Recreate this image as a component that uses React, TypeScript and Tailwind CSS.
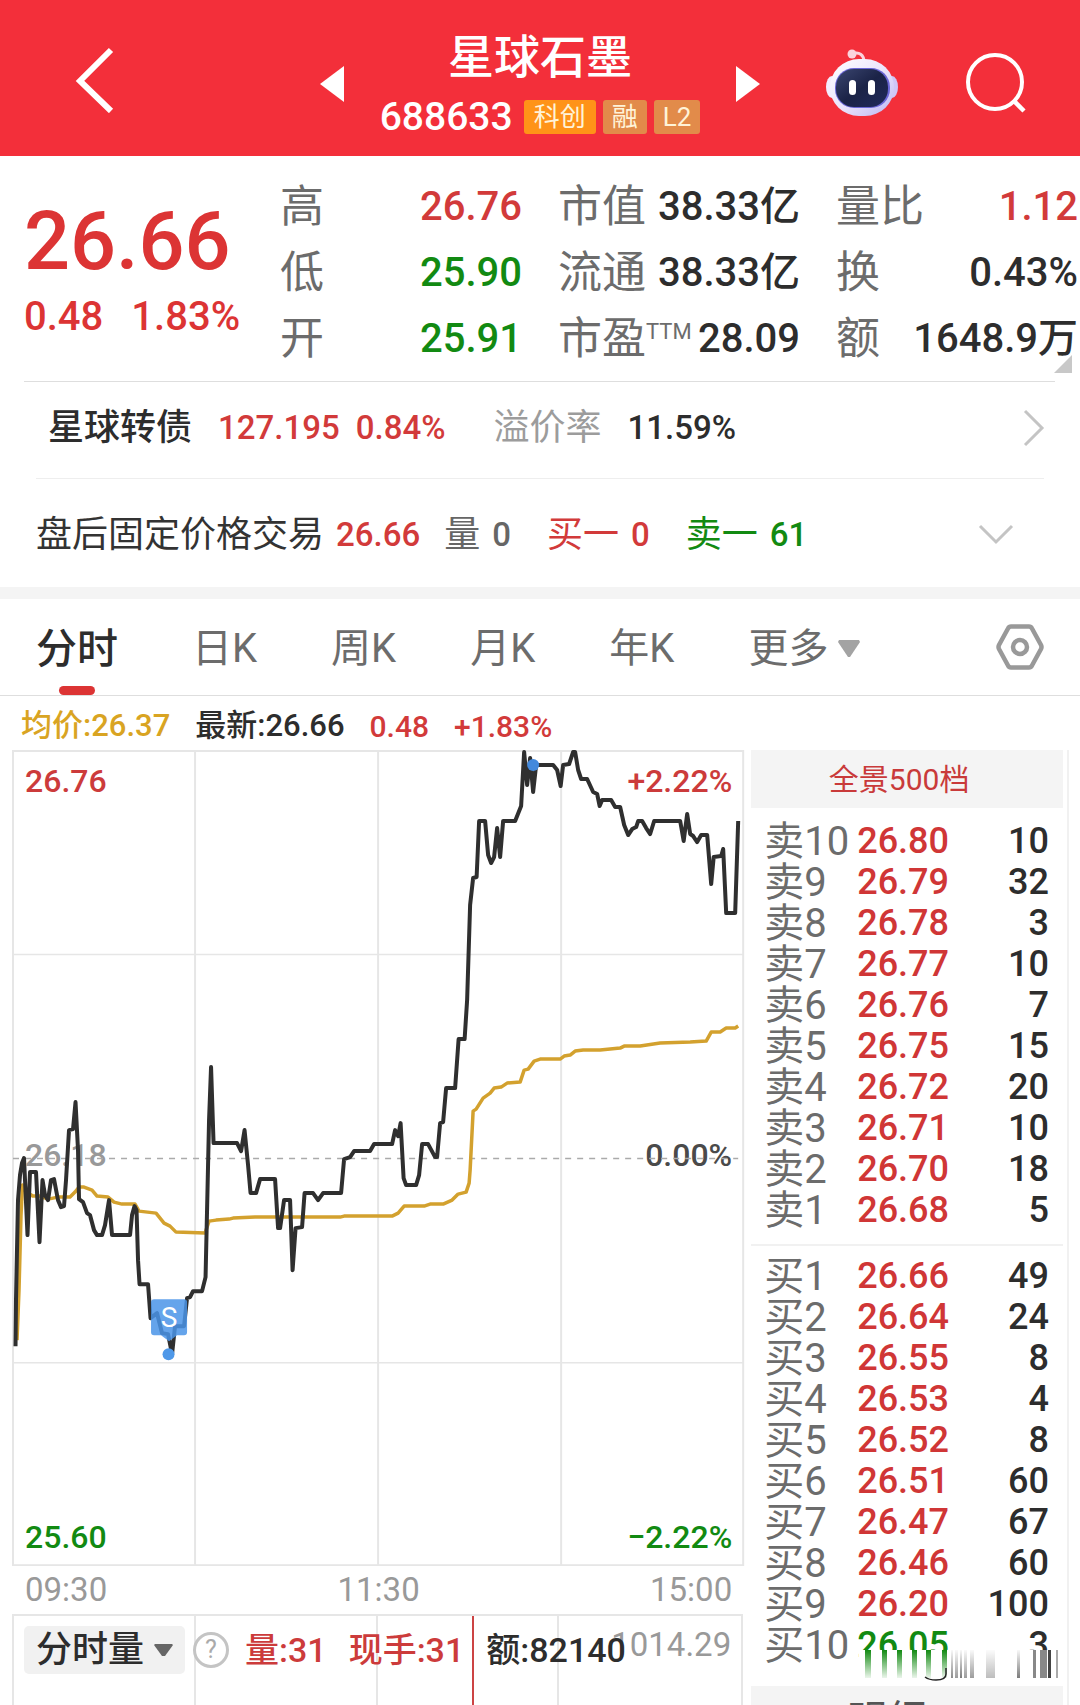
import { useState } from 'react';
import clsx from 'clsx';

interface Level {
  label: string;
  price: string;
  volume: number;
  down?: boolean;
}

const SELLS: Level[] = [
  { label: '卖10', price: '26.80', volume: 10 },
  { label: '卖9', price: '26.79', volume: 32 },
  { label: '卖8', price: '26.78', volume: 3 },
  { label: '卖7', price: '26.77', volume: 10 },
  { label: '卖6', price: '26.76', volume: 7 },
  { label: '卖5', price: '26.75', volume: 15 },
  { label: '卖4', price: '26.72', volume: 20 },
  { label: '卖3', price: '26.71', volume: 10 },
  { label: '卖2', price: '26.70', volume: 18 },
  { label: '卖1', price: '26.68', volume: 5 },
];

const BUYS: Level[] = [
  { label: '买1', price: '26.66', volume: 49 },
  { label: '买2', price: '26.64', volume: 24 },
  { label: '买3', price: '26.55', volume: 8 },
  { label: '买4', price: '26.53', volume: 4 },
  { label: '买5', price: '26.52', volume: 8 },
  { label: '买6', price: '26.51', volume: 60 },
  { label: '买7', price: '26.47', volume: 67 },
  { label: '买8', price: '26.46', volume: 60 },
  { label: '买9', price: '26.20', volume: 100 },
  { label: '买10', price: '26.05', volume: 3, down: true },
];

const TABS = ['分时', '日K', '周K', '月K', '年K'];

const PRICE_LINE =
  '15.5,1346 16,1300 18,1200 20,1175 22,1163 24,1158 27.5,1235 30,1172 36,1172 39.5,1242 42.5,1180 45,1195 48,1200 51,1180 54,1179 58,1200 61,1207 64,1206 66,1180 69,1130 73,1129 75.5,1102 78,1150 79,1199 83,1202 87,1213 90,1215 94,1230 97,1235 102,1235 105,1225 109,1200 112,1235 130,1235 132,1215 134.5,1206 136.5,1210 138,1260 139.5,1284 148,1284 150.5,1318 157,1313 162,1333 168,1334 172,1354 175,1326 184,1326 187,1298 190,1297 193,1291 202,1291 205.5,1277 207,1210 209,1120 211,1067 213.5,1143 237,1143 241,1151 244.5,1130 248,1165 250.5,1193 256,1193 260,1179 275,1179 278,1228 280,1228 284,1200 290,1200 292.5,1270 295.5,1228 302,1227 304.5,1193 313,1193 318,1200 323,1193 341,1193 344,1159 350,1157 354,1151 370,1151 374,1144 392,1144 395,1130 398,1136 400.5,1123 403.5,1178 406,1185 416,1185 419,1175 422,1144 428,1144 435,1157 437,1157 440,1123 443,1122 446,1088 455,1088 458.5,1039 464.5,1039 467,1000 470,905 473,878 476.5,877 479,821 485,821 488,855 491,863 494,857 497,828 500,857 503,821 515,821 521,806 524,752 527,785 530,758 533,792 536,765 553,765 557,770 560.5,786 563,765 569,764 573,752 575,752 578,770 581,779 587,779 593,792 597,794 599.5,806 602,800 611,800 615,807 620,807 624,825 628,835 632,829 636,827 638,821 642,821 646,828 650,834 654,821 680,821 683.5,841 687,814 690,834 693,836 697,842 701,835 707,835 711,884 713.5,857 721,856 723,849 726,913 735,913 738,821';

const AVERAGE_LINE =
  '17,1340 19,1290 21,1215 22.5,1185 26,1192 33,1196 40,1196 48,1199 58,1197 70,1197 75,1192 79,1187 84,1187 92,1190 97,1196 108,1197 114,1202 122,1204 135,1204 139,1211 156,1213 164,1223 170,1226 176,1232 205,1233 209,1221 216,1220 229,1219 233,1218 255,1217 340,1217 344,1216 392,1216 398,1213 404,1206 424,1206 430,1204 443,1204 452,1200 458,1194 466,1192 469,1183 470,1170 473,1111 476,1109 483,1098 490,1093 494,1088 501,1087 507,1083 520,1082 524,1070 528,1069 534,1061 540,1059 560,1059 564,1056 570,1055 575,1051 583,1050 600,1050 620,1048 624,1046 640,1046 660,1043 690,1042 706,1041 711,1032 720,1032 726,1028 735,1028 738,1026';

function RobotIcon() {
  return (
    <svg viewBox="0 0 72 68" className="h-[68px] w-[72px]" aria-hidden="true">
      <defs>
        <linearGradient id="shell" x1="0" y1="0" x2="1" y2="1">
          <stop offset="0" stopColor="#ffffff" />
          <stop offset="0.55" stopColor="#e9e2fb" />
          <stop offset="1" stopColor="#b9b4f3" />
        </linearGradient>
        <linearGradient id="visor" x1="0" y1="0" x2="1" y2="1">
          <stop offset="0" stopColor="#3b4670" />
          <stop offset="0.5" stopColor="#1b2347" />
          <stop offset="1" stopColor="#20295a" />
        </linearGradient>
      </defs>
      <path d="M26 5 C33 2 38 6 38 13" fill="none" stroke="#fbd3dc" strokeWidth="3" />
      <circle cx="26" cy="5" r="4.5" fill="#fbd3dc" />
      <ellipse cx="6" cy="38" rx="6" ry="11" fill="#f3ecfd" />
      <ellipse cx="66" cy="38" rx="6" ry="11" fill="#cfc6f7" />
      <rect x="4" y="10" width="64" height="57" rx="29" fill="url(#shell)" />
      <rect x="9" y="19" width="55" height="40" rx="19" fill="#6a66d6" />
      <rect x="10" y="20" width="52" height="38" rx="18" fill="url(#visor)" />
      <rect x="23" y="31" width="7" height="15" rx="3.5" fill="#fff" />
      <rect x="42" y="31" width="7" height="15" rx="3.5" fill="#fff" />
    </svg>
  );
}

function Header() {
  return (
    <header className="grid h-[156px] shrink-0 grid-cols-[1fr_auto_1fr] items-center bg-[#f32f3a] text-white">
      <button aria-label="返回" className="ml-[74px] w-10 pt-1">
        <svg viewBox="0 0 40 66" className="h-[66px] w-10">
          <path d="M37 3 L6 34 L37 64" fill="none" stroke="#fff" strokeWidth="6" />
        </svg>
      </button>
      <div className="flex items-center gap-9 pt-[11px]">
        <button aria-label="上一只">
          <svg viewBox="0 0 24 36" className="h-9 w-6">
            <path d="M24 0 V36 L0 18 Z" fill="#fff" />
          </svg>
        </button>
        <div className="flex flex-col items-center pt-[6px]">
          <h1 className="text-[46px] leading-[60px] font-medium">星球石墨</h1>
          <div className="flex items-center gap-[7px] text-[26px] leading-[34px] text-[#fff3d8]">
            <span className="mr-1 text-[39px] leading-[60px] font-medium text-white">688633</span>
            <span className="rounded-[3px] bg-[#ff9318] px-[10px]">科创</span>
            <span className="rounded-[3px] bg-[#e28b4a] px-[9px]">融</span>
            <span className="rounded-[3px] bg-[#e28b4a] px-[9px]">L2</span>
          </div>
        </div>
        <button aria-label="下一只">
          <svg viewBox="0 0 24 36" className="h-9 w-6">
            <path d="M0 0 V36 L24 18 Z" fill="#fff" />
          </svg>
        </button>
      </div>
      <div className="flex items-center justify-end gap-[68px] pt-[10px] pr-[54px]">
        <button aria-label="智能助手">
          <RobotIcon />
        </button>
        <button aria-label="搜索">
          <svg viewBox="0 0 60 62" className="h-[62px] w-[60px]">
            <circle cx="29" cy="30" r="27" fill="none" stroke="#fff" strokeWidth="4" />
            <path d="M48 49 L58 59" stroke="#fff" strokeWidth="4.5" />
          </svg>
        </button>
      </div>
    </header>
  );
}

interface QuoteItemProps {
  label: string;
  value: string;
  color?: string;
  sup?: string;
}

function QuoteItem({ label, value, color = 'text-[#2d2d2d]', sup }: QuoteItemProps) {
  return (
    <div className="flex items-center justify-between whitespace-nowrap">
      <dt className="flex text-[44px] text-[#6c6c6c]">
        {label}
        {sup && <sup className="top-0 pt-[15px] text-[22px] leading-[22px]">{sup}</sup>}
      </dt>
      <dd className={clsx('text-[40px] font-medium', color)}>{value}</dd>
    </div>
  );
}

function Quote() {
  return (
    <section className="relative flex pt-[18px] pb-[9px]">
      <div className="w-[280px] shrink-0 pl-6 font-medium text-[#dc3434]">
        <p className="pt-5 text-[81px] leading-[96px]">26.66</p>
        <p className="flex gap-7 text-[40px] leading-[54px] whitespace-nowrap">
          <span>0.48</span>
          <span>1.83%</span>
        </p>
      </div>
      <dl className="grid flex-1 grid-cols-3 gap-x-9 pr-0.5 leading-[66px]">
        <QuoteItem label="高" value="26.76" color="text-[#d23a3a]" />
        <QuoteItem label="市值" value="38.33亿" />
        <QuoteItem label="量比" value="1.12" color="text-[#d23a3a]" />
        <QuoteItem label="低" value="25.90" color="text-[#128a12]" />
        <QuoteItem label="流通" value="38.33亿" />
        <QuoteItem label="换" value="0.43%" />
        <QuoteItem label="开" value="25.91" color="text-[#128a12]" />
        <QuoteItem label="市盈" sup="TTM" value="28.09" />
        <QuoteItem label="额" value="1648.9万" />
      </dl>
      <svg viewBox="0 0 18 18" className="absolute right-2 bottom-2 size-[18px]" aria-hidden="true">
        <path d="M18 0 V18 H0 Z" fill="#c8c8c8" />
      </svg>
    </section>
  );
}

function RelatedRows() {
  return (
    <section className="leading-[48px] whitespace-nowrap">
      <a href="#bond" className="mr-[25px] ml-6 flex h-[97px] items-center border-t border-[#dedede] pb-1 pl-6 text-[33px] font-medium text-[#d23a3a]">
        <span className="text-[36px] text-[#2d2d2d]">星球转债</span>
        <span className="ml-[26px]">127.195</span>
        <span className="ml-4">0.84%</span>
        <span className="ml-12 text-[36px] font-normal text-[#9c9c9c]">溢价率</span>
        <span className="ml-[26px] text-[#2d2d2d]">11.59%</span>
        <svg viewBox="0 0 22 38" className="mr-[10px] ml-auto h-[38px] w-[22px]" aria-hidden="true">
          <path d="M2 2 L19 19 L2 36" fill="none" stroke="#c4c4c4" strokeWidth="3" />
        </svg>
      </a>
      <div className="mx-9 flex h-[109px] items-center border-t border-[#eee] pt-1 text-[33px] font-medium">
        <span className="text-[36px] font-normal text-[#333]">盘后固定价格交易</span>
        <span className="ml-3 text-[#d23a3a]">26.66</span>
        <span className="ml-6 text-[36px] font-normal text-[#666]">量</span>
        <span className="ml-3 text-[#666]">0</span>
        <span className="ml-9 text-[36px] font-normal text-[#d23a3a]">买一</span>
        <span className="ml-3 text-[#d23a3a]">0</span>
        <span className="ml-9 text-[36px] font-normal text-[#128a12]">卖一</span>
        <span className="ml-3 text-[#128a12]">61</span>
        <button aria-label="展开" className="mr-[30px] ml-auto">
          <svg viewBox="0 0 36 22" className="h-[22px] w-9">
            <path d="M2 2 L18 18 L34 2" fill="none" stroke="#c4c4c4" strokeWidth="3" />
          </svg>
        </button>
      </div>
    </section>
  );
}

function Tabs() {
  const [active, setActive] = useState('分时');

  return (
    <nav className="flex h-[109px] shrink-0 items-center border-t-[12px] border-b border-t-[#f4f4f4] border-b-[#dedede] pr-9 pl-9 text-[40px] leading-[96px] whitespace-nowrap text-[#6c6c6c]">
      <div className="flex gap-[74px]">
        {TABS.map((tab) => (
          <button
            key={tab}
            onClick={() => setActive(tab)}
            className={clsx('relative pt-1', active === tab && 'text-[41px] font-medium text-[#2d2d2d]')}
          >
            {tab}
            {active === tab && (
              <span className="absolute bottom-0.5 left-1/2 h-[9px] w-9 -translate-x-1/2 rounded-full bg-[#dc3434]" />
            )}
          </button>
        ))}
        <button className="flex items-center gap-[10px] pt-1">
          更多
          <svg viewBox="0 0 22 18" className="h-[18px] w-[22px]" aria-hidden="true">
            <path d="M1 0 H21 L22 2 L12 17 H10 L0 2 Z" fill="#a3a3a3" />
          </svg>
        </button>
      </div>
      <button aria-label="设置" className="ml-auto">
        <svg viewBox="0 0 48 46" className="h-[46px] w-12">
          <path d="M15 2.5 H33 Q35 2.5 36 4.5 L45 21 Q46 23 45 25 L36 41.5 Q35 43.5 33 43.5 H15 Q13 43.5 12 41.5 L3 25 Q2 23 3 21 L12 4.5 Q13 2.5 15 2.5 Z" fill="none" stroke="#999" strokeWidth="4.5" />
          <circle cx="24" cy="23" r="7" fill="none" stroke="#999" strokeWidth="4.5" />
        </svg>
      </button>
    </nav>
  );
}

function PriceChart() {
  return (
    <div className="relative text-[32px] leading-[40px] font-medium">
      <svg viewBox="12 750 733 816" className="block w-full" role="img" aria-label="分时走势">
        <g fill="none" stroke="#e6e6e6" strokeWidth="2">
          <rect x="13" y="751" width="730" height="814" />
          <path d="M195 751 V1565 M378 751 V1565 M561 751 V1565" />
          <path d="M13 954.5 H743 M13 1362.5 H743" strokeWidth="1.5" />
        </g>
        <text x="25" y="1166" fill="#999">26.18</text>
        <text x="732" y="1166" fill="#4a4a4a" textAnchor="end">0.00%</text>
        <path d="M13 1158.5 H738" stroke="#aaa" strokeWidth="1.5" strokeDasharray="6 6" />
        <polyline points={AVERAGE_LINE} fill="none" stroke="#d3a12e" strokeWidth="3.5" strokeLinejoin="round" />
        <polyline points={PRICE_LINE} fill="none" stroke="#2f2f2f" strokeWidth="4" strokeLinejoin="round" />
        <circle cx="533" cy="765" r="6" fill="#4389dc" />
        <path d="M154 1299 H184 Q187 1299 187 1302 V1332 Q187 1335 184 1335 H177 L169 1341 L161 1335 H154 Q151 1335 151 1332 V1302 Q151 1299 154 1299 Z" fill="#4a94e8" fillOpacity="0.85" />
        <circle cx="168.5" cy="1354" r="6" fill="#4f98e8" />
        <text x="169" y="1327" fill="#fff" fontSize="28" fontWeight="400" textAnchor="middle">S</text>
      </svg>
      <span className="absolute top-[11px] left-[13px] text-[#cc3b3b]">26.76</span>
      <span className="absolute top-[11px] right-[13px] text-[#cc3b3b]">+2.22%</span>
      <span className="absolute bottom-[9px] left-[13px] text-[#128a12]">25.60</span>
      <span className="absolute right-[13px] bottom-[9px] text-[#128a12]">−2.22%</span>
    </div>
  );
}

function VolumePanel() {
  return (
    <div className="relative mr-0.5 min-h-0 flex-1 border-x-2 border-t-2 border-[#e6e6e6]">
      <div className="absolute inset-0 grid grid-cols-4 divide-x-2 divide-[#e6e6e6]">
        <div />
        <div />
        <div />
        <div />
      </div>
      <div className="absolute inset-y-0 left-[63%] w-0.5 bg-[#c44]" />
      <span className="absolute top-[9px] right-[10px] text-[33px] leading-[40px] text-[#999]">1014.29</span>
      <div className="relative flex items-center pt-[10px] pl-[10px] text-[34px] leading-[48px] font-medium whitespace-nowrap text-[#cc3b3b]">
        <button className="flex items-center gap-[10px] rounded-[5px] bg-[#f1f1f1] pr-3 pl-3 text-[36px] text-[#2d2d2d]">
          分时量
          <svg viewBox="0 0 19 13" className="h-[13px] w-[19px]" aria-hidden="true">
            <path d="M1 0 H18 L19 1 L11 12 H8 L0 1 Z" fill="#666" />
          </svg>
        </button>
        <button
          aria-label="说明"
          className="ml-2 size-9 rounded-full border-[3px] border-[#c4c4c4] bg-white text-[25px] leading-[30px] font-normal text-[#aaa]"
        >
          ?
        </button>
        <span className="ml-4">量:31</span>
        <span className="ml-[22px]">现手:31</span>
        <span className="ml-[22px] text-[#2d2d2d]">额:82140</span>
      </div>
    </div>
  );
}

function LevelTable({ levels, name }: { levels: Level[]; name: string }) {
  return (
    <table aria-label={name} className="w-full leading-[41px] whitespace-nowrap">
      <tbody>
        {levels.map((level) => (
          <tr key={level.label} className="h-[41px]">
            <th scope="row" className="w-[106px] p-0 pl-[13px] text-left text-[40px] font-normal text-[#6c6c6c]">
              {level.label}
            </th>
            <td className={clsx('p-0 text-[36px] font-medium', level.down ? 'text-[#128a12]' : 'text-[#d03636]')}>
              {level.price}
            </td>
            <td className="p-0 pr-[14px] text-right text-[36px] font-medium text-[#2d2d2d]">{level.volume}</td>
          </tr>
        ))}
      </tbody>
    </table>
  );
}

// vertical streaks fading over the last row: x, width, colour
const STREAKS: [number, number, string][] = [
  [6, 6, '#128a12'],
  [23, 5, '#128a12'],
  [38, 5, '#128a12'],
  [53, 5, '#128a12'],
  [67, 5, '#128a12'],
  [83, 5, '#128a12'],
  [92, 2, '#888'],
  [96, 3, '#999'],
  [101, 2, '#777'],
  [105, 3, '#999'],
  [111, 4, '#999'],
  [127, 9, '#bbb'],
  [158, 3, '#777'],
  [174, 3, '#888'],
  [181, 7, '#888'],
  [189, 3, '#444'],
  [197, 2, '#aaa'],
];

function OrderBook() {
  return (
    <aside className="mr-[11px] min-w-0 border-r-2 border-[#f1f1f1] pr-1 pl-[6px]">
      <button className="block h-[58px] w-full bg-[#f4f4f4] pr-4 text-[30px] text-[#c93a3a]">全景500档</button>
      <div className="pt-[13px] pb-[13px]">
        <LevelTable levels={SELLS} name="卖盘" />
      </div>
      <div className="relative border-t-2 border-[#f1f1f1] pt-[10px] pb-5">
        <LevelTable levels={BUYS} name="买盘" />
        <svg viewBox="0 0 204 32" className="absolute right-0 bottom-1 h-8 w-[204px]" aria-hidden="true">
          <defs>
            <linearGradient id="fadeDown" x1="0" y1="0" x2="0" y2="1">
              <stop offset="0" stopColor="#fff" stopOpacity="0" />
              <stop offset="1" stopColor="#fff" stopOpacity="0.95" />
            </linearGradient>
            <linearGradient id="fadeUp" x1="0" y1="1" x2="0" y2="0">
              <stop offset="0" stopColor="#fff" stopOpacity="0" />
              <stop offset="1" stopColor="#fff" stopOpacity="0.95" />
            </linearGradient>
          </defs>
          <rect width="204" height="32" fill="#fff" />
          {STREAKS.map(([x, width, fill]) => (
            <rect key={x} x={x} y="0" width={width} height="28" fill={fill} />
          ))}
          <rect width="90" height="29" fill="url(#fadeDown)" />
          <rect x="91" width="82" height="29" fill="url(#fadeUp)" />
          <path d="M66 27 Q70 30 77 30 Q87 30 87 24 V18" fill="none" stroke="#222" strokeWidth="1.5" />
        </svg>
      </div>
      <button className="block w-full bg-[#f4f4f4] pt-[10px] pr-10 text-[40px] leading-[50px] text-[#555]">明细</button>
    </aside>
  );
}

export default function App() {
  return (
    <div className="flex h-screen flex-col overflow-hidden bg-white font-[Roboto,'Noto_Sans_CJK_SC',sans-serif]">
      <Header />
      <Quote />
      <RelatedRows />
      <Tabs />
      <div className="flex h-[54px] shrink-0 items-center gap-[25px] pt-[6px] pl-[21px] text-[31px] font-medium text-[#d23a3a]">
        <span className="text-[#d9a422]">均价:26.37</span>
        <span className="text-[#2d2d2d]">最新:26.66</span>
        <span className="text-[30px]">0.48</span>
        <span className="text-[30px]">+1.83%</span>
      </div>
      <main className="grid min-h-0 flex-1 grid-cols-[69fr_31fr]">
        <section className="flex min-h-0 flex-col pl-3">
          <PriceChart />
          <div className="flex justify-between py-1 pr-[13px] pl-[13px] text-[33px] leading-[40px] text-[#999]">
            <span>09:30</span>
            <span>11:30</span>
            <span>15:00</span>
          </div>
          <VolumePanel />
        </section>
        <OrderBook />
      </main>
    </div>
  );
}
